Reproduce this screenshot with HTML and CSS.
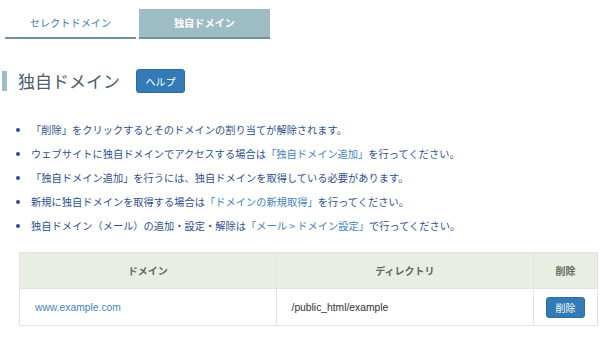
FILE: index.html
```html
<!DOCTYPE html>
<html lang="ja">
<head>
    <meta charset="UTF-8">
    <meta name="viewport" content="width=device-width, initial-scale=1.0">
    <title>独自ドメイン</title>
    <link rel="stylesheet" href="styles.css">
</head>
<body>
    <div class="tabs">
        <a href="#" class="tab">セレクトドメイン</a>
        <span class="tab active">独自ドメイン</span>
    </div>
    <div class="heading">
        <h1>独自ドメイン</h1>
        <button class="help-btn">ヘルプ</button>
    </div>
    <ul class="notes">
        <li>「削除」をクリックするとそのドメインの割り当てが解除されます。</li>
        <li>ウェブサイトに独自ドメインでアクセスする場合は<a href="#">「独自ドメイン追加」</a>を行ってください。</li>
        <li>「独自ドメイン追加」を行うには、独自ドメインを取得している必要があります。</li>
        <li>新規に独自ドメインを取得する場合は<a href="#">「ドメインの新規取得」</a>を行ってください。</li>
        <li>独自ドメイン（メール）の追加・設定・解除は<a href="#">「メール &gt; ドメイン設定」</a>で行ってください。</li>
    </ul>
    <table class="domains">
        <thead>
            <tr>
                <th class="col-domain">ドメイン</th>
                <th class="col-dir">ディレクトリ</th>
                <th class="col-del">削除</th>
            </tr>
        </thead>
        <tbody>
            <tr>
                <td><a href="#">www.example.com</a></td>
                <td>/public_html/example</td>
                <td class="col-del"><button class="delete-btn">削除</button></td>
            </tr>
        </tbody>
    </table>
</body>
</html>
```

FILE: styles.css
```css
body {
    font-family: "Noto Sans CJK JP", "Liberation Sans", sans-serif;
    margin: 0;
    padding: 0;
    background-color: #ffffff;
    color: #333333;
    font-size: 10px;
}
a {
    color: #4583c2;
    text-decoration: none;
}
.tabs {
    display: flex;
    gap: 3px;
    margin: 9px 0 0 5px;
}
.tab {
    width: 131px;
    height: 28px;
    line-height: 28px;
    text-align: center;
    border-bottom: 2px solid #6f929c;
    font-size: 10.2px;
    color: #3f7bbd;
}
.tab.active {
    background-color: #9dbcc3;
    color: #ffffff;
    font-weight: bold;
}
.heading {
    display: flex;
    align-items: center;
    margin: 30px 0 0 2px;
}
h1 {
    margin: 0;
    padding-left: 11px;
    border-left: 5px solid #9fbdc5;
    height: 20px;
    line-height: 20px;
    font-size: 17px;
    font-weight: normal;
    color: #4b5b6b;
}
.help-btn {
    margin-left: 16px;
    width: 49px;
    height: 24px;
    padding: 0;
    border: 1px solid #2e6da4;
    border-radius: 3px;
    background-color: #337ab7;
    color: #ffffff;
    font-family: inherit;
    font-size: 10px;
    cursor: pointer;
}
.notes {
    margin: 25px 0 0 0;
    padding-left: 31px;
    color: #2f4f8f;
    list-style: disc;
}
.notes li {
    height: 24px;
    line-height: 24px;
    font-size: 10.2px;
    letter-spacing: 0.05px;
}
.domains {
    margin: 14px 0 0 19px;
    width: 579px;
    border-collapse: collapse;
    font-size: 10px;
}
.domains th, .domains td {
    border: 1px solid #e3e3e3;
    padding: 0 15px;
}
.domains th {
    height: 35px;
    background-color: #e9eee5;
    color: #616a58;
    font-weight: bold;
    text-align: center;
}
.domains td {
    height: 36px;
    text-align: left;
    font-family: "Liberation Sans", "Noto Sans CJK JP", sans-serif;
    font-size: 10.3px;
}
.col-domain {
    width: 256px;
}
.col-dir {
    width: 255px;
}
.domains .col-del {
    width: 68px;
    padding: 0;
    text-align: center;
}
.delete-btn {
    width: 39px;
    height: 21px;
    padding: 0;
    border: 1px solid #2e6da4;
    border-radius: 3px;
    background-color: #337ab7;
    color: #ffffff;
    font-family: "Noto Sans CJK JP", sans-serif;
    font-size: 10px;
    cursor: pointer;
}
```
